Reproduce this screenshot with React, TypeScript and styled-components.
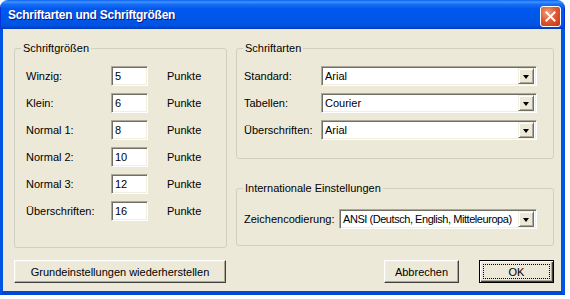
import React from "react";
import styled, { createGlobalStyle } from "styled-components";

const GlobalStyle = createGlobalStyle`
  html, body {
    margin: 0;
    background: #ffffff;
  }
  body {
    font-family: "Liberation Sans", Arial, sans-serif;
    font-size: 11px;
    color: #000000;
  }
`;

const Window = styled.div`
  width: 565px;
  height: 295px;
  display: flex;
  flex-direction: column;
  border-radius: 8px 8px 0 0;
  overflow: hidden;
`;

const TitleBar = styled.div`
  height: 29px;
  flex: none;
  display: flex;
  align-items: center;
  justify-content: space-between;
  padding: 0 3px 0 7px;
  background: linear-gradient(
    to bottom,
    #0a5fef 0%,
    #3d95ff 7%,
    #1b6ff5 14%,
    #0058ee 30%,
    #0056e8 70%,
    #0052e0 88%,
    #0044d0 96%,
    #0035b8 100%
  );
  border-left: 1px solid #0831d9;
  border-right: 1px solid #0831d9;
`;

const Title = styled.span`
  color: #ffffff;
  font-weight: bold;
  font-size: 12px;
  letter-spacing: -0.25px;
  text-shadow: 1px 1px 0 #0a1883;
  padding-top: 1px;
`;

const CloseButton = styled.div`
  width: 21px;
  height: 21px;
  box-sizing: border-box;
  border: 1px solid #ffffff;
  border-radius: 3px;
  background: radial-gradient(circle at 35% 30%, #f0a080 0%, #e25a35 45%, #c2350f 100%);
  display: flex;
  align-items: center;
  justify-content: center;
  margin-top: 3px;
`;

const Body = styled.div`
  flex: 1;
  background: #ece9d8;
  border-left: 3px solid #0054e3;
  border-right: 4px solid #0054e3;
  border-bottom: 4px solid #0048d8;
  padding: 19px 7px 8px 11px;
  display: flex;
  flex-direction: column;
`;

const Columns = styled.div`
  display: grid;
  grid-template-columns: 213px 318px;
  column-gap: 9px;
`;

const Stack = styled.div`
  display: flex;
  flex-direction: column;
  gap: 29px;
`;

const GroupBox = styled.div<{ $height: number; $padTop: number; $padLeft: number }>`
  position: relative;
  box-sizing: border-box;
  height: ${({ $height }) => $height}px;
  border: 1px solid #d0d0bf;
  border-radius: 3px;
  padding: ${({ $padTop, $padLeft }) => `${$padTop}px 0 0 ${$padLeft}px`};
`;

const GroupTitle = styled.span`
  position: absolute;
  top: -7px;
  left: 6px;
  padding: 0 2px;
  line-height: 13px;
  background: #ece9d8;
`;

const Rows = styled.div`
  display: flex;
  flex-direction: column;
  gap: 7px;
`;

const Row = styled.div<{ $labelWidth: number }>`
  display: grid;
  grid-template-columns: ${({ $labelWidth }) => $labelWidth}px auto auto;
  align-items: center;
  justify-content: start;
`;

const Label = styled.span`
  line-height: 13px;
`;

const sunken = `
  box-sizing: border-box;
  border-style: solid;
  border-width: 1px;
  border-color: #aca899 #ffffff #ffffff #aca899;
  box-shadow: inset 1px 1px 0 #716f64, inset -1px -1px 0 #f1efe2;
  background: #ffffff;
`;

const TextBox = styled.div`
  ${sunken}
  width: 37px;
  height: 20px;
  padding: 3px 0 0 3px;
  line-height: 13px;
`;

const Unit = styled.span`
  margin-left: 19px;
`;

const Combo = styled.div<{ $width: number }>`
  ${sunken}
  width: ${({ $width }) => $width}px;
  height: 20px;
  display: flex;
  align-items: center;
  padding: 2px;
`;

const ComboText = styled.span<{ $tight?: boolean }>`
  flex: 1;
  padding-left: 1px;
  line-height: 13px;
  white-space: nowrap;
  overflow: hidden;
  letter-spacing: ${({ $tight }) => ($tight ? "-0.45px" : "normal")};
`;

const ComboButton = styled.div`
  width: 16px;
  height: 16px;
  flex: none;
  box-sizing: border-box;
  background: #ece9d8;
  border-style: solid;
  border-width: 1px;
  border-color: #f1efe2 #716f64 #716f64 #f1efe2;
  box-shadow: inset 1px 1px 0 #ffffff, inset -1px -1px 0 #aca899;
  display: flex;
  align-items: center;
  justify-content: center;
`;

const Arrow = styled.span`
  width: 0;
  height: 0;
  border-left: 3.5px solid transparent;
  border-right: 3.5px solid transparent;
  border-top: 4px solid #000000;
  margin-top: 1px;
`;

const ButtonRow = styled.div`
  margin-top: 12px;
  display: flex;
  justify-content: space-between;
`;

const ButtonGroup = styled.div`
  display: flex;
  gap: 20px;
`;

const Button = styled.div<{ $width: number; $default?: boolean }>`
  position: relative;
  width: ${({ $width }) => $width}px;
  height: 23px;
  box-sizing: border-box;
  display: flex;
  align-items: center;
  justify-content: center;
  background: #ece9d8;
  border-style: solid;
  border-width: 1px;
  border-color: ${({ $default }) =>
    $default ? "#000000" : "#ffffff #404040 #404040 #ffffff"};
  box-shadow: ${({ $default }) =>
    $default
      ? "inset 1px 1px 0 #ffffff, inset -1px -1px 0 #404040, inset -2px -2px 0 #aca899"
      : "inset -1px -1px 0 #aca899, inset 1px 1px 0 #f1efe2"};
`;

const FocusRing = styled.span`
  position: absolute;
  inset: 3px;
  border: 1px dotted #000000;
`;

const sizes = [
  { label: "Winzig:", value: "5" },
  { label: "Klein:", value: "6" },
  { label: "Normal 1:", value: "8" },
  { label: "Normal 2:", value: "10" },
  { label: "Normal 3:", value: "12" },
  { label: "Überschriften:", value: "16" },
];

const fonts = [
  { label: "Standard:", value: "Arial" },
  { label: "Tabellen:", value: "Courier" },
  { label: "Überschriften:", value: "Arial" },
];

function ComboBox({ width, value, tight }: { width: number; value: string; tight?: boolean }) {
  return (
    <Combo $width={width}>
      <ComboText $tight={tight}>{value}</ComboText>
      <ComboButton>
        <Arrow />
      </ComboButton>
    </Combo>
  );
}

export default function App() {
  return (
    <>
      <GlobalStyle />
      <Window>
        <TitleBar>
          <Title>Schriftarten und Schriftgrößen</Title>
          <CloseButton>
            <svg width="11" height="11" viewBox="0 0 11 11">
              <path d="M1.5 1.5 L9.5 9.5 M9.5 1.5 L1.5 9.5" stroke="#ffffff" strokeWidth="2" strokeLinecap="square" />
            </svg>
          </CloseButton>
        </TitleBar>
        <Body>
          <Columns>
            <GroupBox $height={200} $padTop={17} $padLeft={11}>
              <GroupTitle>Schriftgrößen</GroupTitle>
              <Rows>
                {sizes.map((s) => (
                  <Row key={s.label} $labelWidth={85}>
                    <Label>{s.label}</Label>
                    <TextBox>{s.value}</TextBox>
                    <Unit>Punkte</Unit>
                  </Row>
                ))}
              </Rows>
            </GroupBox>
            <Stack>
              <GroupBox $height={111} $padTop={17} $padLeft={7}>
                <GroupTitle>Schriftarten</GroupTitle>
                <Rows>
                  {fonts.map((f) => (
                    <Row key={f.label} $labelWidth={77}>
                      <Label>{f.label}</Label>
                      <ComboBox width={216} value={f.value} />
                    </Row>
                  ))}
                </Rows>
              </GroupBox>
              <GroupBox $height={58} $padTop={20} $padLeft={7}>
                <GroupTitle>Internationale Einstellungen</GroupTitle>
                <Row $labelWidth={95}>
                  <Label>Zeichencodierung:</Label>
                  <ComboBox width={198} value="ANSI (Deutsch, English, Mitteleuropa)" tight />
                </Row>
              </GroupBox>
            </Stack>
          </Columns>
          <ButtonRow>
            <Button $width={212}>Grundeinstellungen wiederherstellen</Button>
            <ButtonGroup>
              <Button $width={75}>Abbrechen</Button>
              <Button $width={75} $default>
                <FocusRing />
                OK
              </Button>
            </ButtonGroup>
          </ButtonRow>
        </Body>
      </Window>
    </>
  );
}
